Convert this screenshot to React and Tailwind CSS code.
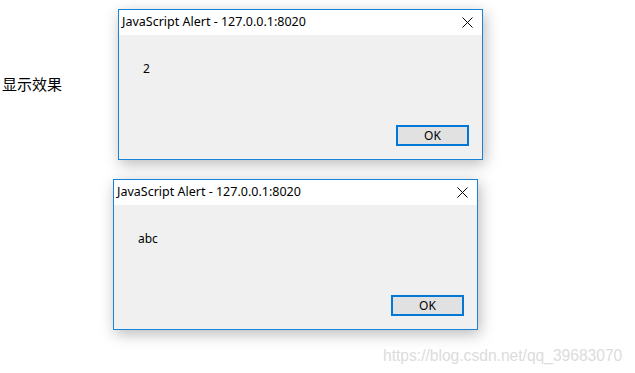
import React from "react";

function AlertDialog({ message, className }) {
  return (
    <div
      className={
        "absolute w-[365px] h-[151px] border border-[#1883d7] bg-[#f0f0f0] flex flex-col shadow-[2px_4px_14px_rgba(0,0,0,0.28)] " +
        className
      }
      style={{ fontFamily: '"Noto Sans", "Open Sans", sans-serif' }}
    >
      <div className="h-[25px] bg-white flex items-center justify-between pl-[3px] pr-[9px]">
        <span className="text-[12.5px] text-black leading-none">JavaScript Alert - 127.0.0.1:8020</span>
        <svg width="11" height="11" viewBox="0 0 11 11">
          <path d="M0.5 0.5 L10.5 10.5 M10.5 0.5 L0.5 10.5" stroke="#000" strokeWidth="1" />
        </svg>
      </div>
      <div className="flex-1 flex flex-col">
        <div className="pl-[24px] pt-[28px] text-[12px] text-black leading-none">{message}</div>
        <div className="flex-1" />
        <div className="flex justify-end pr-[13px] pb-[13px]">
          <div className="w-[73px] h-[21px] border-2 border-[#0078d7] bg-[#e1e1e1] flex items-center justify-center text-[12px] text-black">
            OK
          </div>
        </div>
      </div>
    </div>
  );
}

export default function App() {
  return (
    <div className="relative w-[635px] h-[373px] bg-white overflow-hidden">
      <div
        className="pt-[73px] pl-[2px] text-[15px] text-black"
        style={{ fontFamily: '"Noto Sans CJK SC", sans-serif' }}
      >
        显示效果
      </div>
      <AlertDialog message="2" className="left-[118px] top-[9px]" />
      <AlertDialog message="abc" className="left-[113px] top-[179px]" />
      <div
        className="absolute left-[383px] top-[344px] text-[15.6px] text-[#dcdcdc]"
        style={{ fontFamily: '"Liberation Sans", Arial, sans-serif' }}
      >
        https://blog.csdn.net/qq_39683070
      </div>
    </div>
  );
}
